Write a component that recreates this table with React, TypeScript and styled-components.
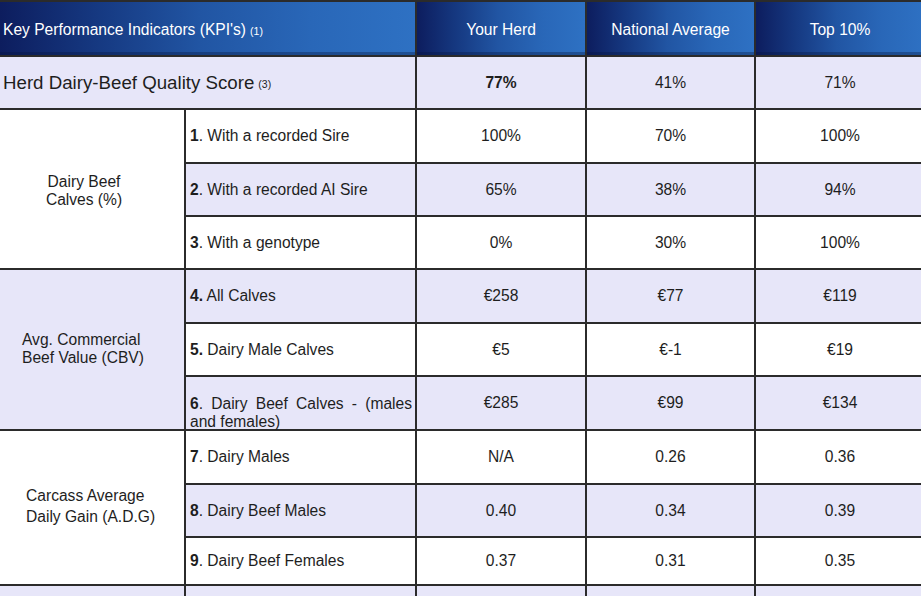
import styled, { createGlobalStyle } from "styled-components";

const GlobalStyle = createGlobalStyle`
  html, body {
    margin: 0;
    padding: 0;
    background: #ffffff;
    overflow: hidden;
  }
  body {
    font-family: "Liberation Sans", Arial, sans-serif;
    color: #1e1e1e;
  }
`;

const LAVENDER = "#e7e6f9";
const LINE = "#2b2b2b";

export const Grid = styled.div`
  display: grid;
  grid-template-columns: 186px 231px 170px 169px 170px;
  grid-template-rows: 55px 53px 54px 53px 53px 54px 53px 54px 54px 53px 48px 40px;
  width: 926px;
  border-top: 2px solid ${LINE};
`;

const Cell = styled.div<{ $shade?: boolean }>`
  box-sizing: border-box;
  border-right: 2px solid ${LINE};
  border-bottom: 2px solid ${LINE};
  background: ${(p) => (p.$shade ? LAVENDER : "#ffffff")};
  display: flex;
  align-items: center;
  font-size: 15.6px;
  line-height: 18px;
  min-width: 0;
`;

export const HeadCell = styled(Cell)<{ $wide?: boolean }>`
  grid-column: ${(p) => (p.$wide ? "span 2" : "auto")};
  justify-content: ${(p) => (p.$wide ? "flex-start" : "center")};
  padding-left: ${(p) => (p.$wide ? "3px" : "0")};
  padding-top: 3px;
  color: #ffffff;
  background: linear-gradient(
    to right,
    #0d1d5e 0%,
    #15377f 22%,
    #2155a3 48%,
    #2967b8 75%,
    #2e71c3 100%
  );
  box-shadow: inset 0 -3px 0 rgba(6, 20, 60, 0.35);
`;

export const Note = styled.span<{ $dark?: boolean }>`
  font-size: 10.5px;
  margin-left: 4px;
  position: relative;
  top: 1px;
  color: ${(p) => (p.$dark ? "#1e1e1e" : "#ffffff")};
`;

export const ScoreLabel = styled(Cell)`
  grid-column: span 2;
  font-size: 18.7px;
  padding-left: 3px;
  padding-top: 1px;
`;

export const Value = styled(Cell)<{ $bold?: boolean }>`
  justify-content: center;
  font-weight: ${(p) => (p.$bold ? 700 : 400)};
`;

export const GroupLabel = styled(Cell)<{
  $span: number;
  $center?: boolean;
  $indent: number;
  $lh: number;
  $shift: number;
}>`
  grid-row: span ${(p) => p.$span};
  justify-content: ${(p) => (p.$center ? "center" : "flex-start")};
  text-align: ${(p) => (p.$center ? "center" : "left")};
  padding-left: ${(p) => p.$indent}px;
  padding-right: ${(p) => (p.$center ? 16 : 0)}px;
  padding-top: ${(p) => Math.max(p.$shift, 0)}px;
  padding-bottom: ${(p) => Math.max(-p.$shift, 0)}px;
  line-height: ${(p) => p.$lh}px;
`;

export const Item = styled(Cell)<{ $wrap?: boolean }>`
  padding: 0 3px 0 4px;
  align-items: ${(p) => (p.$wrap ? "flex-end" : "center")};

  & > div {
    width: 100%;
    margin-bottom: ${(p) => (p.$wrap ? "-2px" : "0")};
  }

  b {
    font-weight: 700;
  }
`;

// a justified first line of a label that runs onto two lines
export const SpreadLine = styled.span`
  display: block;
  text-align: justify;
  text-align-last: justify;
`;

export const TailLine = styled.span`
  display: block;
`;

type Row = {
  num: string;
  text: string;
  tail?: string;
  values: [string, string, string];
};

type Group = {
  label: string[];
  center?: boolean;
  indent: number;
  lh: number;
  shift: number;
  rows: Row[];
};

const groups: Group[] = [
  {
    label: ["Dairy Beef", "Calves (%)"],
    center: true,
    indent: 0,
    lh: 18,
    shift: 4,
    rows: [
      { num: "1", text: ". With a recorded Sire", values: ["100%", "70%", "100%"] },
      { num: "2", text: ". With a recorded AI Sire", values: ["65%", "38%", "94%"] },
      { num: "3", text: ". With a genotype", values: ["0%", "30%", "100%"] },
    ],
  },
  {
    label: ["Avg. Commercial", "Beef Value (CBV)"],
    indent: 22,
    lh: 18,
    shift: -1,
    rows: [
      { num: "4.", text: " All Calves", values: ["€258", "€77", "€119"] },
      { num: "5.", text: " Dairy Male Calves", values: ["€5", "€-1", "€19"] },
      {
        num: "6",
        text: ". Dairy Beef Calves - (males",
        tail: "and females)",
        values: ["€285", "€99", "€134"],
      },
    ],
  },
  {
    label: ["Carcass Average", "Daily Gain (A.D.G)"],
    indent: 26,
    lh: 21.5,
    shift: -3,
    rows: [
      { num: "7", text: ". Dairy Males", values: ["N/A", "0.26", "0.36"] },
      { num: "8", text: ". Dairy Beef Males", values: ["0.40", "0.34", "0.39"] },
      { num: "9", text: ". Dairy Beef Females", values: ["0.37", "0.31", "0.35"] },
    ],
  },
];

// rows alternate white / lavender through the whole body
let stripe = 0;

const App = () => {
  stripe = 0;
  return (
    <>
      <GlobalStyle />
      <Grid>
        <HeadCell $wide>
          Key Performance Indicators (KPI's)
          <Note>(1)</Note>
        </HeadCell>
        <HeadCell>Your Herd</HeadCell>
        <HeadCell>National Average</HeadCell>
        <HeadCell>Top 10%</HeadCell>

        <ScoreLabel $shade>
          Herd Dairy-Beef Quality Score
          <Note $dark>(3)</Note>
        </ScoreLabel>
        <Value $shade $bold>
          77%
        </Value>
        <Value $shade>41%</Value>
        <Value $shade>71%</Value>

        {groups.map((g, gi) =>
          g.rows.map((r, ri) => {
            const shade = stripe++ % 2 === 1;
            return (
              <>
                {ri === 0 && (
                  <GroupLabel
                    key={`g${gi}`}
                    $span={g.rows.length}
                    $shade={gi === 1}
                    $center={g.center}
                    $indent={g.indent}
                    $lh={g.lh}
                    $shift={g.shift}
                  >
                    <div>
                      {g.label[0]}
                      <br />
                      {g.label[1]}
                    </div>
                  </GroupLabel>
                )}
                <Item $shade={shade} $wrap={!!r.tail}>
                  {r.tail ? (
                    <div>
                      <SpreadLine>
                        <b>{r.num}</b>
                        {r.text}
                      </SpreadLine>
                      <TailLine>{r.tail}</TailLine>
                    </div>
                  ) : (
                    <div>
                      <b>{r.num}</b>
                      {r.text}
                    </div>
                  )}
                </Item>
                {r.values.map((v, vi) => (
                  <Value key={vi} $shade={shade}>
                    {v}
                  </Value>
                ))}
              </>
            );
          })
        )}

        <Cell $shade />
        <Cell $shade />
        <Cell $shade />
        <Cell $shade />
        <Cell $shade />
      </Grid>
    </>
  );
};

export default App;
